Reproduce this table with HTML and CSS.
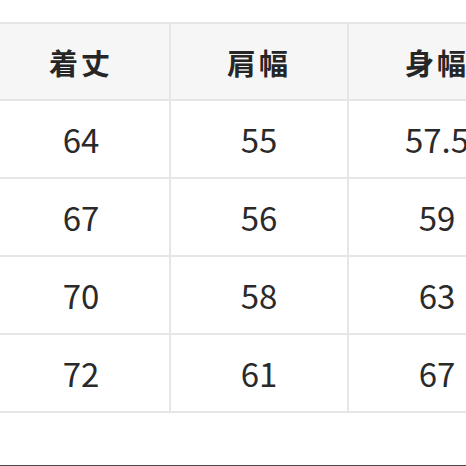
FILE: index.html
```html
<!DOCTYPE html>
<html lang="ja">
<head>
<meta charset="utf-8">
<link rel="stylesheet" href="styles.css">
</head>
<body>
<div class="page">
  <div class="clip">
    <table class="size-table">
      <thead>
        <tr><th>着丈</th><th>肩幅</th><th>身幅</th></tr>
      </thead>
      <tbody>
        <tr><td>64</td><td>55</td><td>57.5</td></tr>
        <tr><td>67</td><td>56</td><td>59</td></tr>
        <tr><td>70</td><td>58</td><td>63</td></tr>
        <tr><td>72</td><td>61</td><td>67</td></tr>
      </tbody>
    </table>
  </div>
</div>
</body>
</html>
```
FILE: styles.css
```css
html, body {
  margin: 0;
  padding: 0;
  background: #ffffff;
}
.page {
  width: 466px;
  height: 466px;
  box-sizing: border-box;
  border-bottom: 1px solid #4a4a4a;
  overflow: hidden;
  padding-top: 22px;
}
.clip {
  margin-left: -9px;
  width: 560px;
}
.size-table {
  border-collapse: collapse;
  table-layout: fixed;
  width: 534px;
  font-family: "Noto Sans CJK JP", "Noto Sans", sans-serif;
  color: #2a2a2a;
}
.size-table th,
.size-table td {
  border: 2px solid #e6e6e6;
  text-align: center;
  vertical-align: middle;
  padding: 0;
  width: 176px;
}
.size-table th {
  height: 75px;
  background: #f6f6f6;
  font-weight: 700;
  font-size: 29px;
  letter-spacing: 3px;
  color: #262626;
}
.size-table td {
  height: 76px;
  font-size: 33px;
  font-weight: 400;
  color: #2a2a2a;
}
```
